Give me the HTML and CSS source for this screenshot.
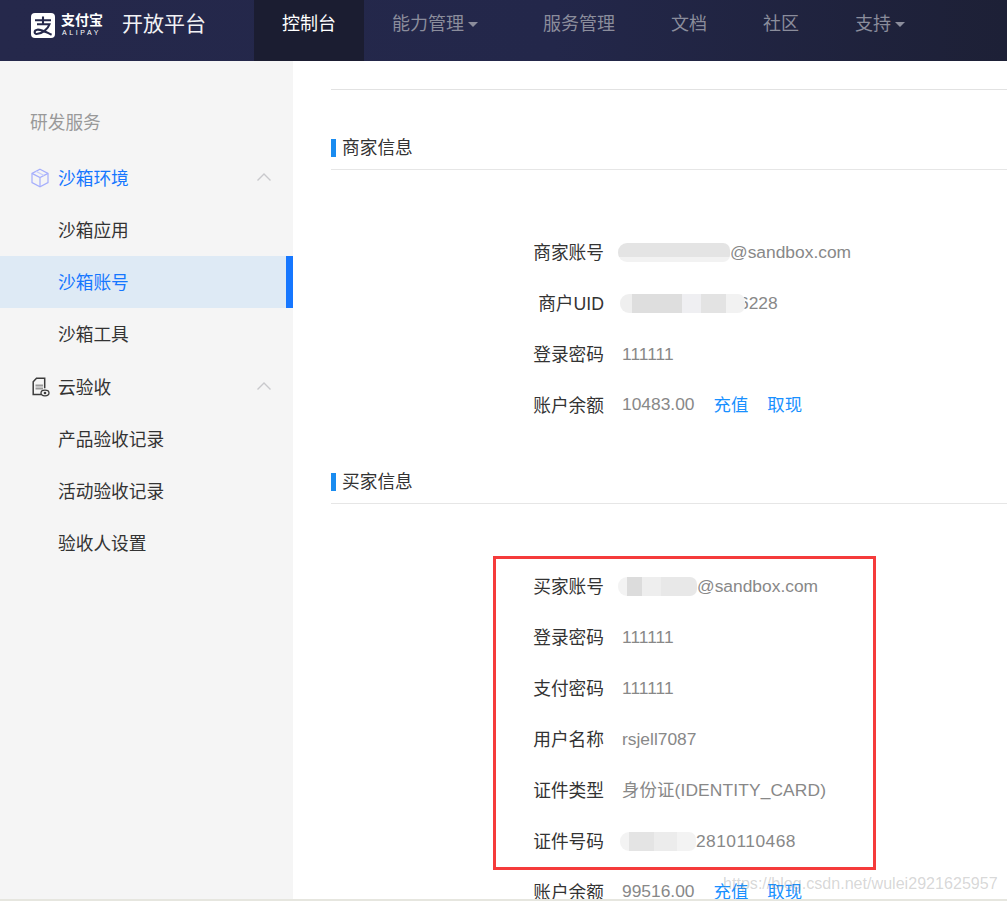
FILE: index.html
```html
<!DOCTYPE html>
<html lang="zh-CN">
<head>
<meta charset="utf-8">
<title>支付宝开放平台</title>
<link rel="stylesheet" href="styles.css">
</head>
<body>
<div class="app">
  <header class="topbar">
    <div class="brand">
      <svg class="brand-mark" viewBox="0 0 24 25" width="24" height="25">
        <rect width="24" height="25" rx="4" fill="#fff"/>
        <path d="M4 7.2h16M12 3.5v7.5M6 11.2h12.5C17 16 11 21 5.6 21 3 21 2.8 17.2 6.2 16.7c4-.6 9 2.5 14.4 5" fill="none" stroke="#25284b" stroke-width="2.1"/>
      </svg>
      <div class="brand-name">
        <span class="brand-cn">支付宝</span>
        <span class="brand-en">ALIPAY</span>
      </div>
      <span class="brand-title">开放平台</span>
    </div>
    <nav class="nav">
      <a class="nav-item nav-item-active">控制台</a>
      <a class="nav-item nav-item-menu">能力管理<i class="caret"></i></a>
      <a class="nav-item">服务管理</a>
      <a class="nav-item">文档</a>
      <a class="nav-item">社区</a>
      <a class="nav-item nav-item-menu">支持<i class="caret"></i></a>
    </nav>
  </header>
  <div class="body">
    <aside class="sidebar">
      <div class="side-heading">研发服务</div>
      <div class="side-group side-open">
        <svg class="side-icon" viewBox="0 0 20 20" width="20" height="20" fill="none" stroke="#a5aefc" stroke-width="1.2">
          <path d="M10 1.2l8 4.2v9.2l-8 4.2-8-4.2V5.4z"/>
          <path d="M2 5.4l8 4.2 8-4.2M10 9.6v9"/>
          <path d="M6 3.3l8 4.2" stroke="#c5ccfd"/>
        </svg>
        <span class="side-label">沙箱环境</span>
        <svg class="chevron" viewBox="0 0 14 8" width="14" height="8" fill="none" stroke="#c9c9cc" stroke-width="1.4"><path d="M.5 7.5L7 1l6.5 6.5"/></svg>
      </div>
      <a class="side-link">沙箱应用</a>
      <a class="side-link side-link-active">沙箱账号</a>
      <a class="side-link">沙箱工具</a>
      <div class="side-group side-group-next">
        <svg class="side-icon" viewBox="0 0 20 20" width="20" height="20" fill="none">
          <path d="M11 17.5H3.2V4.8L6.5 1.2h8.2v10" stroke="#3c3c3c" stroke-width="1.5"/>
          <path d="M5.5 8.5h7.5M5.5 11.5h7.5" stroke="#9a9a9a" stroke-width="2"/>
          <ellipse cx="15" cy="16" rx="4" ry="2.8" stroke="#3c3c3c" stroke-width="1.3"/>
          <circle cx="15" cy="16" r="1.3" fill="#3c3c3c"/>
        </svg>
        <span class="side-label">云验收</span>
        <svg class="chevron" viewBox="0 0 14 8" width="14" height="8" fill="none" stroke="#c9c9cc" stroke-width="1.4"><path d="M.5 7.5L7 1l6.5 6.5"/></svg>
      </div>
      <a class="side-link">产品验收记录</a>
      <a class="side-link">活动验收记录</a>
      <a class="side-link">验收人设置</a>
    </aside>
    <main class="content">
      <hr class="top-rule">
      <section class="section">
        <h2 class="section-title"><span class="section-text">商家信息</span></h2>
        <div class="rows">
          <div class="row"><span class="label">商家账号</span><span class="value"><i class="blur blur-a"></i>@sandbox.com</span></div>
          <div class="row"><span class="label">商户UID</span><span class="value"><i class="blur blur-b"></i>6228</span></div>
          <div class="row"><span class="label">登录密码</span><span class="value">111111</span></div>
          <div class="row"><span class="label">账户余额</span><span class="value">10483.00<a class="link link-first">充值</a><a class="link">取现</a></span></div>
        </div>
      </section>
      <section class="section section-next">
        <h2 class="section-title"><span class="section-text">买家信息</span></h2>
        <div class="rows">
          <div class="row"><span class="label">买家账号</span><span class="value"><i class="blur blur-c"></i>@sandbox.com</span></div>
          <div class="row"><span class="label">登录密码</span><span class="value">111111</span></div>
          <div class="row"><span class="label">支付密码</span><span class="value">111111</span></div>
          <div class="row"><span class="label">用户名称</span><span class="value">rsjell7087</span></div>
          <div class="row"><span class="label">证件类型</span><span class="value value-wide">身份证(IDENTITY_CARD)</span></div>
          <div class="row"><span class="label">证件号码</span><span class="value"><i class="blur blur-d"></i><span class="digits">2810110468</span></span></div>
          <div class="row"><span class="label">账户余额</span><span class="value">99516.00<a class="link link-first">充值</a><a class="link">取现</a></span></div>
          <div class="highlight"></div>
        </div>
      </section>
    </main>
  </div>
  <div class="watermark">https://blog.csdn.net/wulei2921625957</div>
  <div class="window-edge"></div>
</div>
</body>
</html>
```

FILE: styles.css
```css
* { box-sizing: border-box; }
html, body { margin: 0; padding: 0; }
body {
  font-family: "Liberation Sans", "Noto Sans CJK SC", sans-serif;
  font-size: 17.7px;
  color: #333;
  background: #fff;
}
.app {
  position: relative;
  width: 1007px;
  height: 901px;
  overflow: hidden;
  display: flex;
  flex-direction: column;
}
.topbar {
  flex: none;
  height: 61px;
  display: flex;
  background: linear-gradient(90deg, #25284b 0%, #23274a 55%, #1d2036 100%);
}
.brand {
  width: 254px;
  padding: 13px 0 0 31px;
  display: flex;
  align-items: flex-start;
}
.brand-mark { flex: none; }
.brand-name {
  width: 67px;
  padding-left: 6px;
  display: flex;
  flex-direction: column;
  color: #fff;
}
.brand-cn {
  font-size: 14px;
  line-height: 15px;
  font-weight: 700;
  letter-spacing: 0;
}
.brand-en {
  font-size: 7px;
  line-height: 10px;
  letter-spacing: 2.6px;
  padding-left: 1px;
}
.brand-title {
  margin-top: -3px;
  font-size: 21px;
  line-height: 28px;
  color: #f2f2f5;
}
.nav { display: flex; font-size: 18px; }
.nav-item {
  height: 61px;
  padding: 0 28px;
  line-height: 49px;
  color: #8b8d9c;
}
.nav-item-active {
  background: #1b1d31;
  color: #fff;
}
.nav-item-menu { padding-right: 37px; }
.caret {
  display: inline-block;
  margin-left: 4px;
  vertical-align: 3px;
  border-style: solid;
  border-width: 5px 5px 0;
  border-color: #8b8d9c transparent transparent;
}
.body {
  flex: 1;
  display: flex;
  min-height: 0;
}
.sidebar {
  flex: none;
  width: 293px;
  padding-top: 35px;
  background: #f5f5f5;
}
.side-heading {
  height: 52px;
  margin-bottom: 4px;
  padding-left: 30px;
  line-height: 54px;
  color: #999;
}
.side-group {
  height: 52px;
  padding: 0 22px 0 30px;
  display: flex;
  align-items: center;
  line-height: 20px;
  color: #333;
}
.side-group-next { margin-top: 1px; }
.side-open { color: #1677ff; }
.side-icon { flex: none; margin-right: 8px; }
.side-label { margin-top: 2px; }
.chevron { flex: none; margin-left: auto; margin-top: -2px; }
.side-link {
  display: block;
  height: 52px;
  padding-left: 58px;
  line-height: 54px;
  color: #333;
}
.side-link-active {
  background: #deeaf5;
  color: #1677ff;
  border-right: 7px solid #1677ff;
}
.content {
  flex: 1;
  min-width: 0;
  padding: 28px 0 0 38px;
}
.top-rule {
  height: 1px;
  margin: 0 0 49px;
  border: 0;
  background: #e2e2e2;
}
.section-next { margin-top: 42px; }
.section-title {
  height: 31px;
  margin: 0;
  border-bottom: 1px solid #e6e6e6;
  font-size: 17.7px;
  font-weight: 400;
  line-height: 18px;
}
.section-text {
  display: block;
  height: 18px;
  padding-left: 6px;
  border-left: 5px solid #1a8cf0;
  color: #333;
}
.rows {
  position: relative;
  margin-top: 57px;
}
.row {
  height: 51px;
  display: flex;
  align-items: center;
  line-height: 20px;
}
.label {
  flex: none;
  width: 273px;
  text-align: right;
  color: #333;
}
.value {
  margin-left: 18px;
  margin-top: -2px;
  font-size: 17.4px;
  color: #888;
  white-space: nowrap;
}
.value-wide { letter-spacing: 0.12px; }
.digits { letter-spacing: 0.45px; }
.link {
  color: #1890ff;
  margin-left: 19px;
  vertical-align: -1px;
}
.blur {
  display: inline-block;
  position: relative;
  height: 19px;
  border-radius: 9px 7px 7px 9px;
  vertical-align: -4px;
  filter: blur(0.7px);
}
.blur-a {
  width: 112px;
  margin-left: -4px;
  background: linear-gradient(180deg, #e4e4e4 0 76%, #f2f2f2 76%);
}
.blur-b {
  width: 125px;
  margin-left: -2px;
  margin-right: -6px;
  background: linear-gradient(90deg, #efefef 0 10%, #dedede 10% 50%, #efeff2 50% 65%, #e3e3e3 65% 85%, #f2f2f2 85%);
}
.blur-c {
  width: 79px;
  margin-left: -4px;
  background: linear-gradient(90deg, #f3f3f3 0 12%, #dcdcdc 12% 30%, #eeeeee 30% 55%, #e8e8e8 55%);
}
.blur-d {
  width: 76px;
  margin-left: -2px;
  background: linear-gradient(90deg, #f3f3f3 0 12%, #e4e4e4 12% 45%, #ececec 45% 75%, #f3f3f3 75%);
}
.highlight {
  position: absolute;
  left: 162px;
  top: -5px;
  width: 383px;
  height: 314px;
  border: 3px solid #f53b3b;
}
.watermark {
  position: absolute;
  left: 723px;
  top: 873px;
  font-size: 16.1px;
  line-height: 20px;
  color: rgba(120, 120, 120, 0.3);
  white-space: nowrap;
}
.window-edge {
  position: absolute;
  left: 0;
  right: 0;
  bottom: 0;
  height: 2px;
  background: #e6e6df;
}
```
